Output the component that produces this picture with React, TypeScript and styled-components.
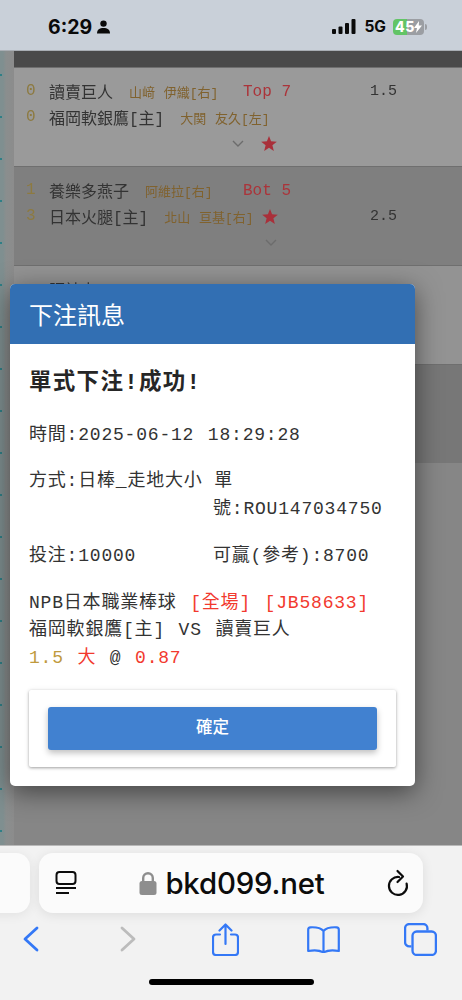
import React from "react";
import styled, { createGlobalStyle } from "styled-components";

const MONO = `"Liberation Mono", "Noto Sans CJK TC", monospace`;
const SANS = `"Noto Sans CJK TC", "Liberation Sans", sans-serif`;

const GlobalStyle = createGlobalStyle`
  html, body {
    margin: 0;
    padding: 0;
    background: #f2f2f2;
  }
  * {
    box-sizing: border-box;
  }
`;

const Phone = styled.div`
  position: relative;
  width: 462px;
  height: 1000px;
  overflow: hidden;
  display: flex;
  flex-direction: column;
  font-family: ${MONO};
`;

/* status bar */
const StatusBar = styled.div`
  height: 51px;
  flex: none;
  background: #c9d0d9;
  display: flex;
  align-items: center;
  justify-content: space-between;
  padding: 3px 35px 0 48px;
  border-bottom: 1px solid #a9aeb4;
`;

const StatusGroup = styled.div`
  display: flex;
  align-items: center;
`;

const Clock = styled.span`
  font: 700 19.5px "Inter", "Liberation Sans", sans-serif;
  color: #0a0a0a;
  margin-right: 5px;
`;

const Network = styled.span`
  font: 700 15.5px "Inter", "Liberation Sans", sans-serif;
  color: #0a0a0a;
  margin: 0 7px 0 8px;
`;

const Battery = styled.div`
  position: relative;
  width: 31px;
  height: 16px;
  border-radius: 4px;
  background: linear-gradient(90deg, #62c466 0 45%, #9b9ea3 45% 100%);
  font: 800 14px "Inter", "Liberation Sans", sans-serif;
  color: #fff;
  padding-left: 2px;
  line-height: 16px;
  letter-spacing: 0.6px;
`;

const BatteryBolt = styled.svg`
  position: absolute;
  right: 2px;
  top: 2px;
`;

const BatteryTip = styled.div`
  width: 2px;
  height: 6px;
  margin-left: 1px;
  border-radius: 0 2px 2px 0;
  background: #9b9ea3;
`;

/* dimmed page behind the dialog */
const Page = styled.div`
  flex: 1;
  min-height: 0;
  display: flex;
  background: #868686;
  filter: blur(0.45px);
`;

const Rail = styled.div`
  width: 14px;
  flex: none;
  background:
    repeating-linear-gradient(180deg, transparent 0 23px, #2f7f86 23px 25px, transparent 25px 42px) left top / 2px 100% no-repeat,
    linear-gradient(90deg, #7f8f90 0 3px, #8a8e8e 6px, #8c8c8c 100%);
`;

const Table = styled.div`
  flex: 1;
  min-width: 0;
  display: flex;
  flex-direction: column;
`;

const TableHead = styled.div`
  height: 16px;
  background: #4a4a4a;
`;

const Row = styled.div<{ $tone: string }>`
  height: 99px;
  padding: 10px 0 0 12px;
  background: ${(p) => p.$tone};
  border-top: 1px solid #6f6f6f;
  display: grid;
  grid-template-columns: 217px 127px 1fr;
  grid-auto-rows: 26px;
  align-items: center;
`;

const TeamLine = styled.div`
  display: flex;
  align-items: center;
  width: max-content;
  white-space: nowrap;
`;

const Score = styled.span`
  width: 23px;
  flex: none;
  font: 16px ${MONO};
  color: #8d7a40;
`;

const Team = styled.span`
  font: 16px ${MONO};
  color: #333;
`;

const Pitcher = styled.span`
  font: 13px ${MONO};
  color: #80622e;
  margin-left: 16px;
  word-spacing: 1px;
`;

const Inning = styled.span`
  font: 16px ${MONO};
  color: #ab343a;
  padding-top: 1px;
`;

const Handicap = styled.span`
  font: 15px ${MONO};
  color: #333;
  padding-top: 1px;
`;

const RowTools = styled.div`
  grid-column: 1;
  display: flex;
  justify-content: flex-end;
  align-items: center;
  gap: 17px;
  margin-right: -34px;
`;

const StarGap = styled.span`
  width: 8px;
`;

const Spacer = styled.span``;

/* dialog */
const Dialog = styled.div`
  position: absolute;
  left: 10px;
  top: 284px;
  width: 405px;
  height: 502px;
  border-radius: 5px;
  background: #fff;
  box-shadow: 0 6px 26px rgba(0, 0, 0, 0.5);
  overflow: hidden;
  color: #333;
`;

const DialogHead = styled.div`
  height: 60px;
  background: #326fb3;
  color: #fff;
  font: 24px/60px ${SANS};
  padding-left: 19px;
`;

const DialogBody = styled.div`
  padding: 24px 19px 0 19px;
  display: flex;
  flex-direction: column;
`;

const DialogTitle = styled.div`
  font: 700 22.5px/30px ${MONO};
  color: #262626;
  letter-spacing: 1.3px;
`;

const InfoLine = styled.div<{ $top?: number; $height?: number }>`
  margin-top: ${(p) => p.$top ?? 0}px;
  font: 18px/${(p) => p.$height ?? 26}px ${MONO};
  letter-spacing: 0.8px;
  word-spacing: 2px;
  white-space: nowrap;
`;

const InfoGrid = styled.div`
  margin-top: 19px;
  display: grid;
  grid-template-columns: 184px 1fr;
  grid-auto-rows: 28px;
  align-items: center;
  font: 18px/26px ${MONO};
  letter-spacing: 0.8px;
  white-space: nowrap;
`;

const Wide = styled.span`
  grid-column: 1 / 3;
`;

const Second = styled.span`
  grid-column: 2;
`;

const Red = styled.span`
  color: #f2392e;
`;

const Gold = styled.span`
  color: #c09a3d;
`;

const ButtonCard = styled.div`
  margin-top: 19px;
  height: 77px;
  background: #fff;
  border-radius: 2px;
  padding: 17px 19px;
  box-shadow: 0 1px 3px rgba(0, 0, 0, 0.35), 0 0 6px rgba(0, 0, 0, 0.06);
`;

const ConfirmButton = styled.button`
  display: block;
  width: 100%;
  height: 43px;
  border: 0;
  border-radius: 3px;
  background: #4181d0;
  color: #fff;
  font: 500 16.5px ${SANS};
  padding: 0 0 5px;
  box-shadow: 0 3px 6px rgba(0, 0, 0, 0.25);
`;

/* safari chrome */
const Chrome = styled.div`
  height: 155px;
  flex: none;
  background: #f2f2f2;
  border-top: 1px solid #b9b9b9;
  display: flex;
  flex-direction: column;
`;

const TabStrip = styled.div`
  margin-top: 7px;
  height: 60px;
  display: flex;
  gap: 9px;
  margin-left: -60px;
`;

const SidePill = styled.div`
  width: 90px;
  border-radius: 14px;
  background: #fbfbfb;
  box-shadow: 0 2px 12px rgba(0, 0, 0, 0.07);
`;

const AddressBar = styled.div`
  width: 384px;
  border-radius: 14px;
  background: #fbfbfb;
  box-shadow: 0 2px 12px rgba(0, 0, 0, 0.09);
  display: flex;
  align-items: center;
  justify-content: space-between;
  padding: 0 14px 0 16px;
`;

const Domain = styled.div`
  display: flex;
  align-items: center;
  gap: 8px;
  font: 500 29.4px "Inter", "Liberation Sans", sans-serif;
  color: #0c0c0c;
  letter-spacing: -0.2px;
`;

const Toolbar = styled.div`
  height: 50px;
  margin-top: 1px;
  margin-left: -18px;
  display: grid;
  grid-template-columns: repeat(5, 97.5px);
  align-items: center;
  justify-items: center;
`;

const HomeBar = styled.div`
  width: 165px;
  height: 6px;
  margin: 15px 0 0 149px;
  border-radius: 3px;
  background: #000;
`;

const Chevron = () => (
  <svg width="12" height="7" viewBox="0 0 12 7" fill="none" stroke="#6c6c6c" strokeWidth="1.4">
    <path d="M1 1l5 5 5-5" />
  </svg>
);

const Star = () => (
  <svg width="16" height="15" viewBox="0 0 24 23" fill="#a9303a">
    <path d="M12 0l3.200 8.200 8.800.5-6.800 5.600 2.200 8.700L12 18.200l-7.400 4.800 2.200-8.700L0 8.700l8.800-.5z" />
  </svg>
);

export default function App() {
  return (
    <Phone>
      <GlobalStyle />
      <StatusBar>
        <StatusGroup>
          <Clock>6:29</Clock>
          <svg width="13" height="14" viewBox="0 0 13 14" fill="#0a0a0a">
            <circle cx="6.500" cy="3.600" r="3.200" />
            <path d="M0 13.400c0-3.600 2.600-5.400 6.500-5.400s6.500 1.800 6.500 5.400z" />
          </svg>
        </StatusGroup>
        <StatusGroup>
          <svg width="24" height="15" viewBox="0 0 24 15" fill="#0a0a0a">
            <rect x="0" y="10" width="4" height="5" rx="1" />
            <rect x="6.500" y="7.500" width="4" height="7.500" rx="1" />
            <rect x="13" y="4" width="4" height="11" rx="1" />
            <rect x="19.500" y="0" width="4" height="15" rx="1" />
          </svg>
          <Network>5G</Network>
          <Battery>
            45
            <BatteryBolt width="8" height="12" viewBox="0 0 8 12" fill="#fff">
              <path d="M5 0L0 7h3l-1 5 6-7.500H4.800z" />
            </BatteryBolt>
          </Battery>
          <BatteryTip />
        </StatusGroup>
      </StatusBar>

      <Page>
        <Rail />
        <Table>
          <TableHead />
          <Row $tone="#9a9a9a">
            <TeamLine>
              <Score>0</Score>
              <Team>讀賣巨人</Team>
              <Pitcher>山﨑 伊織[右]</Pitcher>
            </TeamLine>
            <Inning>Top 7</Inning>
            <Handicap>1.5</Handicap>
            <TeamLine>
              <Score>0</Score>
              <Team>福岡軟銀鷹[主]</Team>
              <Pitcher>大関 友久[左]</Pitcher>
            </TeamLine>
            <Spacer />
            <Spacer />
            <RowTools>
              <Chevron />
              <Star />
            </RowTools>
          </Row>
          <Row $tone="#7f7f7f">
            <TeamLine>
              <Score>1</Score>
              <Team>養樂多燕子</Team>
              <Pitcher>阿維拉[右]</Pitcher>
            </TeamLine>
            <Inning>Bot 5</Inning>
            <Spacer />
            <TeamLine>
              <Score>3</Score>
              <Team>日本火腿[主]</Team>
              <Pitcher>北山 亘基[右]</Pitcher>
              <StarGap />
              <Star />
            </TeamLine>
            <Spacer />
            <Handicap>2.5</Handicap>
            <RowTools>
              <Chevron />
            </RowTools>
          </Row>
          <Row $tone="#939393">
            <TeamLine>
              <Score />
              <Team>阪神虎</Team>
            </TeamLine>
          </Row>
          <Row $tone="#777777" />
        </Table>
      </Page>

      <Dialog>
        <DialogHead>下注訊息</DialogHead>
        <DialogBody>
          <DialogTitle>單式下注!成功!</DialogTitle>
          <InfoLine $top={24}>時間:2025-06-12 18:29:28</InfoLine>
          <InfoGrid>
            <Wide>方式:日棒_走地大小 單</Wide>
            <Second>號:ROU147034750</Second>
          </InfoGrid>
          <InfoGrid>
            <span>投注:10000</span>
            <span>可贏(參考):8700</span>
          </InfoGrid>
          <InfoLine $top={20} $height={27}>
            NPB日本職業棒球 <Red>[全場] [JB58633]</Red>
          </InfoLine>
          <InfoLine>福岡軟銀鷹[主] VS 讀賣巨人</InfoLine>
          <InfoLine $top={2}>
            <Gold>1.5</Gold> <Red>大</Red> @ <Red>0.87</Red>
          </InfoLine>
          <ButtonCard>
            <ConfirmButton>確定</ConfirmButton>
          </ButtonCard>
        </DialogBody>
      </Dialog>

      <Chrome>
        <TabStrip>
          <SidePill />
          <AddressBar>
            <svg width="22" height="24" viewBox="0 0 22 24" fill="none" stroke="#0c0c0c" strokeWidth="2">
              <rect x="1.500" y="1" width="19" height="12" rx="3" />
              <path d="M1 17h20M1 22h13" />
            </svg>
            <Domain>
              <svg width="18" height="24" viewBox="0 0 18 24" fill="#8e8e8e">
                <path d="M3 11V7a6 6 0 0112 0v4h-2.400V7a3.600 3.600 0 00-7.200 0v4z" />
                <rect x="0.500" y="10" width="17" height="14" rx="2.500" />
              </svg>
              bkd099.net
            </Domain>
            <svg width="22" height="28" viewBox="0 0 22 28" fill="none" stroke="#0c0c0c" strokeWidth="2.200" strokeLinecap="round" strokeLinejoin="round">
              <path d="M12 8A9 9 0 1 0 19.600 14.500" />
              <path d="M10.500 2l5.500 5.500-5.500 5.500" />
            </svg>
          </AddressBar>
        </TabStrip>
        <Toolbar>
          <svg width="16" height="26" viewBox="0 0 16 26" fill="none" stroke="#3478f6" strokeWidth="2.800" strokeLinecap="round" strokeLinejoin="round">
            <path d="M14 2L2 13l12 11" />
          </svg>
          <svg width="16" height="26" viewBox="0 0 16 26" fill="none" stroke="#bcbcbc" strokeWidth="2.800" strokeLinecap="round" strokeLinejoin="round">
            <path d="M2 2l12 11L2 24" />
          </svg>
          <svg width="27" height="33" viewBox="0 0 27 33" fill="none" stroke="#3478f6" strokeWidth="2.200" strokeLinecap="round" strokeLinejoin="round">
            <path d="M8 11.500H4a3 3 0 00-3 3V29a3 3 0 003 3h19a3 3 0 003-3V14.500a3 3 0 00-3-3h-4" />
            <path d="M13.500 21V2M7.500 7.500l6-6 6 6" />
          </svg>
          <svg width="33" height="27" viewBox="0 0 33 27" fill="none" stroke="#3478f6" strokeWidth="2.200" strokeLinecap="round" strokeLinejoin="round">
            <path d="M16.500 5C14 2 10 1 3.500 1.300 2 1.400 1.200 2.200 1.200 3.700V25c6-1.200 11.500-.8 15.300 1.500 3.800-2.300 9.300-2.700 15.300-1.500V3.700c0-1.500-.8-2.300-2.300-2.400C23 1 19 2 16.500 5zM16.500 5v21" />
          </svg>
          <svg width="33" height="33" viewBox="0 0 31 31" fill="none" stroke="#3478f6" strokeWidth="2.200" strokeLinejoin="round">
            <path d="M7 22H5a4 4 0 01-4-4V5a4 4 0 014-4h13a4 4 0 014 4v2" />
            <rect x="8" y="8" width="22" height="22" rx="4" />
          </svg>
        </Toolbar>
        <HomeBar />
      </Chrome>
    </Phone>
  );
}
